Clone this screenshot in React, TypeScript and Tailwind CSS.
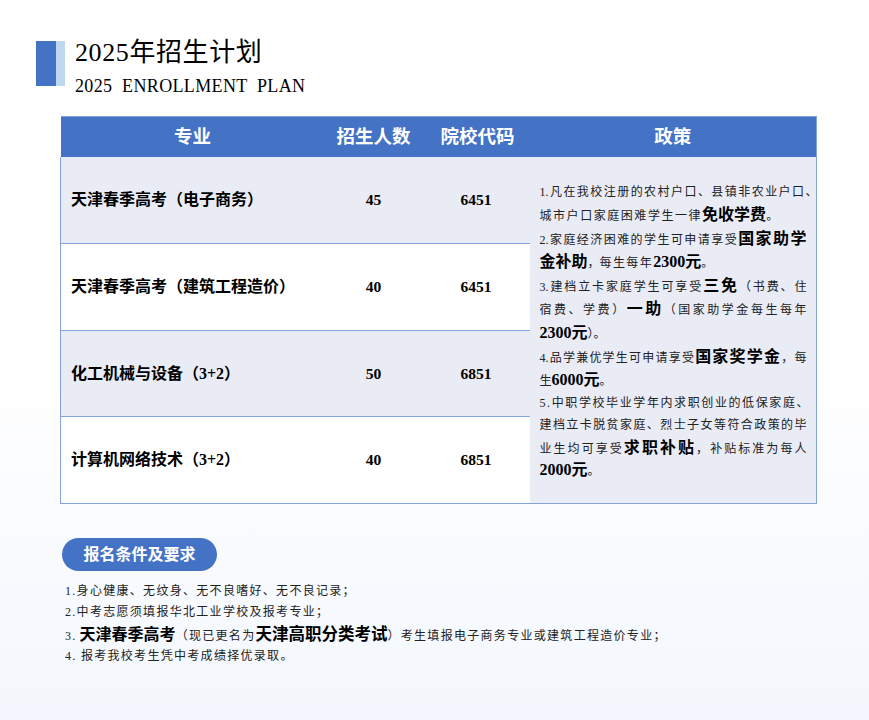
import React from 'react';

const rows = [
  { name: '天津春季高考（电子商务）', count: '45', code: '6451', h: 'h-[87px]', bg: 'bg-[#e9ebf5]' },
  { name: '天津春季高考（建筑工程造价）', count: '40', code: '6451', h: 'h-[87px]', bg: 'bg-white' },
  { name: '化工机械与设备（3+2）', count: '50', code: '6851', h: 'h-[86px]', bg: 'bg-[#e9ebf5]' },
  { name: '计算机网络技术（3+2）', count: '40', code: '6851', h: 'h-[87px]', bg: 'bg-white' },
];

const B: React.FC<{ children: React.ReactNode }> = ({ children }) => (
  <b className="text-[16px] font-bold tracking-normal text-black">{children}</b>
);

// justified single line, the source breaks these by hand
const Line: React.FC<{ children: React.ReactNode; last?: boolean; over?: boolean; tight?: boolean }> = ({ children, last, over, tight }) => (
  <div
    className={`whitespace-nowrap ${tight ? 'h-[22.5px] leading-[22.5px]' : 'h-[23.6px] leading-[23.6px]'} ${
      last ? 'text-left' : 'text-justify [text-align-last:justify]'
    } ${over ? 'w-[278px]' : 'w-[267px]'}`}
  >
    {children}
  </div>
);

export default function App() {
  return (
    <div
      className="h-[720px] w-[869px] overflow-hidden bg-gradient-to-b from-white from-50% to-[#f3f7fd] text-[#111]"
      style={{ fontFamily: '"Liberation Serif", "Noto Sans CJK SC", serif' }}
    >
      <header className="flex pl-9 pt-[41px]">
        <div className="flex h-[45px] w-[29px] shrink-0">
          <div className="w-5 bg-[#4472c4]" />
          <div className="w-[9px] bg-[#bdd7ee]" />
        </div>
        <div className="-mt-[6px] ml-[10px]">
          <h1 className="text-[26px] font-normal leading-[36px] tracking-[0.6px] text-black">2025年招生计划</h1>
          <p className="mt-[5px] whitespace-pre text-[18px] leading-[21px] tracking-[0.35px] text-black">2025  ENROLLMENT  PLAN</p>
        </div>
      </header>

      <div className="ml-[60px] mt-[19px] w-[756px]">
        <table className="w-full table-fixed border-collapse">
          <colgroup>
            <col className="w-[264px]" />
            <col className="w-[98px]" />
            <col className="w-[107px]" />
            <col className="w-[287px]" />
          </colgroup>
          <thead>
            <tr className="h-[40px] bg-[#4472c4] text-[18.5px] font-bold text-white">
              <th className="border-t border-[#84a3da] pt-[2px] font-bold">专业</th>
              <th className="border-t border-[#84a3da] pt-[2px] font-bold">招生人数</th>
              <th className="border-t border-[#84a3da] pl-[3px] pt-[2px] font-bold">院校代码</th>
              <th className="border-t border-r border-[#84a3da] pt-[2px] font-bold">政策</th>
            </tr>
          </thead>
          <tbody>
            {rows.map((row, i) => (
              <tr key={row.name} className={`${row.h} ${row.bg}`}>
                <td className="border-b border-l border-[#84a3da] pl-[10px] text-[16px] font-bold text-black">{row.name}</td>
                <td className="border-b border-[#84a3da] text-center text-[15.5px] font-bold text-black">{row.count}</td>
                <td className="border-b border-[#84a3da] text-center text-[15.5px] font-bold text-black">{row.code}</td>
                {i === 0 && (
                  <td rowSpan={4} className="border-b border-r border-[#84a3da] bg-[#e9ebf5] pl-[10px] align-top">
                    <div className="pt-[24px] text-[12px] text-[#222]">
                      <Line over tight>1.凡在我校注册的农村户口、县镇非农业户口、</Line>
                      <Line last><span className="tracking-[1.55px]">城市户口家庭困难学生一律</span><B>免收学费</B>。</Line>
                      <Line>2.家庭经济困难的学生可申请享受<B>国家助学</B></Line>
                      <Line last><B>金补助</B>，<span className="tracking-[1.4px]">每生每年</span><B>2300元</B>。</Line>
                      <Line>3.建档立卡家庭学生可享受<B>三免</B>（书费、住</Line>
                      <Line>宿费、学费）<B>一助</B>（国家助学金每生每年</Line>
                      <Line last><B>2300元</B>）。</Line>
                      <Line>4.品学兼优学生可申请享受<B>国家奖学金</B>，每</Line>
                      <Line last>生<B>6000元</B>。</Line>
                      <Line last tight><span className="tracking-[1.6px]">5.中职学校毕业学年内求职创业的低保家庭、</span></Line>
                      <Line tight>建档立卡脱贫家庭、烈士子女等符合政策的毕</Line>
                      <Line tight>业生均可享受<B>求职补贴</B>，补贴标准为每人</Line>
                      <Line last tight><B>2000元</B>。</Line>
                    </div>
                  </td>
                )}
              </tr>
            ))}
          </tbody>
        </table>
      </div>

      <section className="ml-[62px] mt-[34px]">
        <div className="flex h-[33px] w-[155px] items-center justify-center rounded-full bg-[#4472c4] text-[16px] font-bold text-white">
          报名条件及要求
        </div>
        <ol className="mt-[10px] pl-[3px] text-[12px] leading-[20px] tracking-[1.3px] text-[#222]">
          <li className="h-[20.5px]">1.身心健康、无纹身、无不良嗜好、无不良记录；</li>
          <li className="h-[20.5px]">2.中考志愿须填报华北工业学校及报考专业；</li>
          <li className="h-[24px] leading-[25px]">3.<span className="tracking-normal"> </span><b className="text-[16px] font-bold tracking-normal text-black">天津春季高考</b>（现已更名为<b className="text-[16.5px] font-bold tracking-normal text-black">天津高职分类考试</b>）考生填报电子商务专业或建筑工程造价专业；</li>
          <li className="h-[21px]">4. 报考我校考生凭中考成绩择优录取。</li>
        </ol>
      </section>
    </div>
  );
}
